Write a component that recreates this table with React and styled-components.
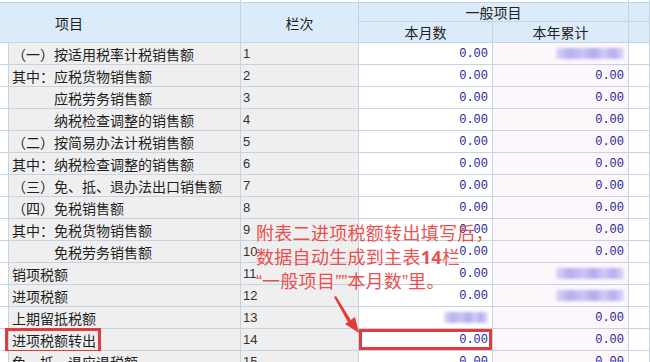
import React from 'react'
import styled, { createGlobalStyle } from 'styled-components'

const GlobalStyle = createGlobalStyle`
    body {
        margin: 0;
        background: #ffffff;
        font-family: "Noto Sans CJK SC", "Noto Sans", sans-serif;
    }
`;

const Page = styled.div`
    position: relative;
    width: 650px;
    height: 362px;
    overflow: hidden;
`;

const Grid = styled.div`
    display: grid;
    grid-template-columns: 9px 232px 118px 134px 136px 1fr;
    grid-template-rows: 3px 19px 21px;
    grid-auto-rows: 22px;
`;

const Cell = styled.div`
    box-sizing: border-box;
    border-right: 1px solid #c4d4e4;
    border-bottom: 1px solid #c4d4e4;
    background: ${p => p.$bg || '#ffffff'};
    display: flex;
    align-items: center;
    overflow: visible;
    white-space: nowrap;
    position: relative;
`;

const HeadCell = styled(Cell)`
    background: #dcebfa;
    font-size: 14px;
    color: #222;
    justify-content: ${p => p.$left ? 'flex-start' : 'center'};
    padding-left: ${p => p.$left ? '55px' : '0'};
    grid-column: ${p => p.$col};
    grid-row: ${p => p.$row};
`;

const StripCell = styled(Cell)`
    grid-column: ${p => p.$col};
`;

const Label = styled(Cell)`
    background: #efefef;
    font-size: 14px;
    color: #1e1e1e;
    padding-left: ${p => p.$indent ? '45px' : '3px'};
`;

const Boxed = styled.span`
    position: relative;
    &::after {
        content: '';
        position: absolute;
        left: -7px;
        right: -5px;
        top: -2px;
        bottom: -3px;
        border: 3px solid #e23b3b;
    }
`;

const LineNo = styled(Cell)`
    background: #efefef;
    font-family: "Liberation Sans", sans-serif;
    font-size: 13px;
    color: #333;
    padding-left: 2px;
`;

const Value = styled(Cell)`
    justify-content: flex-end;
    padding-right: 4px;
    font-family: "Liberation Mono", monospace;
    font-size: 12px;
    color: #1d1d9e;
    box-shadow: ${p => p.$mark ? 'inset 0 0 0 3px #e23b3b' : 'none'};
`;

const Blur = styled.div`
    width: ${p => p.$w}px;
    height: 11px;
    background: linear-gradient(90deg, #d8d3f6 0%, #aaa2ee 20%, #c3bdf4 40%, #a59cee 55%, #c8c2f5 70%, #a9a1ee 85%, #dcd8f8 100%);
    filter: blur(1.5px);
    opacity: 0.85;
`;

const Note = styled.div`
    position: absolute;
    left: 256px;
    top: 221px;
    font-size: 18px;
    line-height: 23.5px;
    color: rgba(236, 56, 56, 0.9);
    white-space: nowrap;
    letter-spacing: 0.3px;

    b {
        font-family: "Noto Sans", sans-serif;
        font-weight: 700;
    }
`;

const Quote = styled.span`
    font-family: "Liberation Sans", sans-serif;
    letter-spacing: 0;
`;

const Arrow = styled.svg`
    position: absolute;
    left: 330px;
    top: 294px;
`;

const rows = [
    { no: 1, label: '（一）按适用税率计税销售额', month: '0.00', year: 'blur' },
    { no: 2, label: '其中：应税货物销售额', month: '0.00', year: '0.00' },
    { no: 3, label: '应税劳务销售额', indent: true, month: '0.00', year: '0.00' },
    { no: 4, label: '纳税检查调整的销售额', indent: true, month: '0.00', year: '0.00' },
    { no: 5, label: '（二）按简易办法计税销售额', month: '0.00', year: '0.00' },
    { no: 6, label: '其中：纳税检查调整的销售额', month: '0.00', year: '0.00' },
    { no: 7, label: '（三）免、抵、退办法出口销售额', month: '0.00', year: '0.00' },
    { no: 8, label: '（四）免税销售额', month: '0.00', year: '0.00' },
    { no: 9, label: '其中：免税货物销售额', month: '0.00', year: '0.00' },
    { no: 10, label: '免税劳务销售额', indent: true, month: '0.00', year: '0.00' },
    { no: 11, label: '销项税额', month: '0.00', year: 'blur' },
    { no: 12, label: '进项税额', month: '0.00', year: 'blur' },
    { no: 13, label: '上期留抵税额', month: 'blur', year: '0.00' },
    { no: 14, label: '进项税额转出', boxed: true, month: '0.00', year: '0.00' },
    { no: 15, label: '免、抵、退应退税额', month: '0.00', year: '0.00' },
];

function renderValue(v, w) {
    return v === 'blur' ? <Blur $w={w} /> : v;
}

export default function App() {
    return (
        <Page>
            <GlobalStyle />
            <Grid>
                <StripCell $col="1 / 3" />
                <StripCell $col="3 / 4" />
                <StripCell $col="4 / 6" />
                <StripCell $col="6 / 7" />

                <HeadCell $col="1 / 3" $row="2 / 4" $left>项目</HeadCell>
                <HeadCell $col="3 / 4" $row="2 / 4">栏次</HeadCell>
                <HeadCell $col="4 / 6" $row="2 / 3">一般项目</HeadCell>
                <HeadCell $col="6 / 7" $row="2 / 3" />
                <HeadCell $col="4 / 5" $row="3 / 4">本月数</HeadCell>
                <HeadCell $col="5 / 6" $row="3 / 4">本年累计</HeadCell>
                <HeadCell $col="6 / 7" $row="3 / 4" />

                {rows.map(r => (
                    <React.Fragment key={r.no}>
                        <Cell />
                        <Label $indent={r.indent}>
                            {r.boxed ? <Boxed>{r.label}</Boxed> : r.label}
                        </Label>
                        <LineNo>{r.no}</LineNo>
                        <Value $mark={r.boxed}>{renderValue(r.month, 44)}</Value>
                        <Value $bg="#fdf7fc">{renderValue(r.year, 68)}</Value>
                        <Cell />
                    </React.Fragment>
                ))}
            </Grid>

            <Note>
                附表二进项税额转出填写后，<br />
                数据自动生成到主表<b>14</b>栏<br />
                <Quote>“</Quote>一般项目<Quote>””</Quote>本月数<Quote>”</Quote>里。
            </Note>

            <Arrow width="34" height="42" viewBox="0 0 34 42">
                <polygon points="4,3 6,2 22,28 19,30" fill="#e23b3b" />
                <polygon points="29,39 15,30 25,23" fill="#e23b3b" />
            </Arrow>
        </Page>
    );
}
